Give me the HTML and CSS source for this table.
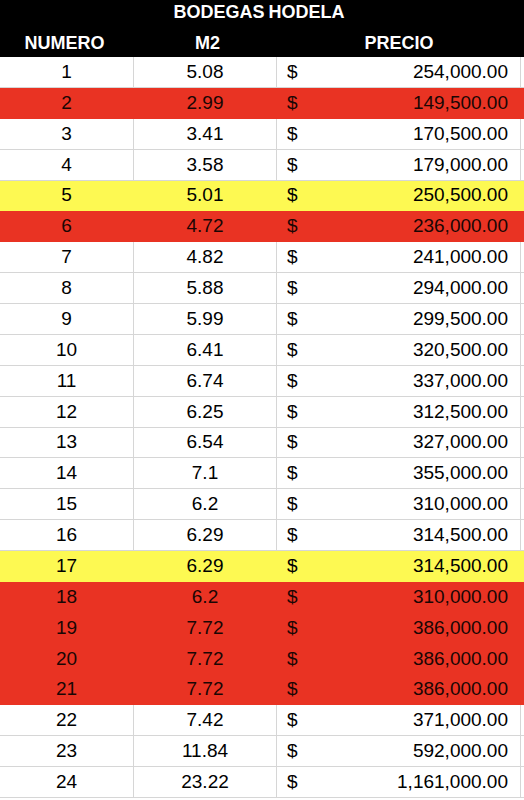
FILE: index.html
```html
<!DOCTYPE html>
<html lang="es">
<head>
<meta charset="utf-8">
<title>Bodegas Hodela</title>
<link rel="stylesheet" href="styles.css">
</head>
<body>
<div class="sheet">
  <div class="title">BODEGAS HODELA</div>
  <div class="head">
    <div class="hc">NUMERO</div>
    <div class="hc">M2</div>
    <div class="hc span2">PRECIO</div>
  </div>
  <div class="body">
    <div class="row"><div class="c num">1</div><div class="c m2">5.08</div><div class="c cur">$</div><div class="c price">254,000.00</div></div>
    <div class="row red"><div class="c num">2</div><div class="c m2">2.99</div><div class="c cur">$</div><div class="c price">149,500.00</div></div>
    <div class="row"><div class="c num">3</div><div class="c m2">3.41</div><div class="c cur">$</div><div class="c price">170,500.00</div></div>
    <div class="row"><div class="c num">4</div><div class="c m2">3.58</div><div class="c cur">$</div><div class="c price">179,000.00</div></div>
    <div class="row yellow"><div class="c num">5</div><div class="c m2">5.01</div><div class="c cur">$</div><div class="c price">250,500.00</div></div>
    <div class="row red"><div class="c num">6</div><div class="c m2">4.72</div><div class="c cur">$</div><div class="c price">236,000.00</div></div>
    <div class="row"><div class="c num">7</div><div class="c m2">4.82</div><div class="c cur">$</div><div class="c price">241,000.00</div></div>
    <div class="row"><div class="c num">8</div><div class="c m2">5.88</div><div class="c cur">$</div><div class="c price">294,000.00</div></div>
    <div class="row"><div class="c num">9</div><div class="c m2">5.99</div><div class="c cur">$</div><div class="c price">299,500.00</div></div>
    <div class="row"><div class="c num">10</div><div class="c m2">6.41</div><div class="c cur">$</div><div class="c price">320,500.00</div></div>
    <div class="row"><div class="c num">11</div><div class="c m2">6.74</div><div class="c cur">$</div><div class="c price">337,000.00</div></div>
    <div class="row"><div class="c num">12</div><div class="c m2">6.25</div><div class="c cur">$</div><div class="c price">312,500.00</div></div>
    <div class="row"><div class="c num">13</div><div class="c m2">6.54</div><div class="c cur">$</div><div class="c price">327,000.00</div></div>
    <div class="row"><div class="c num">14</div><div class="c m2">7.1</div><div class="c cur">$</div><div class="c price">355,000.00</div></div>
    <div class="row"><div class="c num">15</div><div class="c m2">6.2</div><div class="c cur">$</div><div class="c price">310,000.00</div></div>
    <div class="row"><div class="c num">16</div><div class="c m2">6.29</div><div class="c cur">$</div><div class="c price">314,500.00</div></div>
    <div class="row yellow"><div class="c num">17</div><div class="c m2">6.29</div><div class="c cur">$</div><div class="c price">314,500.00</div></div>
    <div class="row red"><div class="c num">18</div><div class="c m2">6.2</div><div class="c cur">$</div><div class="c price">310,000.00</div></div>
    <div class="row red"><div class="c num">19</div><div class="c m2">7.72</div><div class="c cur">$</div><div class="c price">386,000.00</div></div>
    <div class="row red"><div class="c num">20</div><div class="c m2">7.72</div><div class="c cur">$</div><div class="c price">386,000.00</div></div>
    <div class="row red"><div class="c num">21</div><div class="c m2">7.72</div><div class="c cur">$</div><div class="c price">386,000.00</div></div>
    <div class="row"><div class="c num">22</div><div class="c m2">7.42</div><div class="c cur">$</div><div class="c price">371,000.00</div></div>
    <div class="row"><div class="c num">23</div><div class="c m2">11.84</div><div class="c cur">$</div><div class="c price">592,000.00</div></div>
    <div class="row"><div class="c num">24</div><div class="c m2">23.22</div><div class="c cur">$</div><div class="c price">1,161,000.00</div></div>
  </div>
</div>
</body>
</html>
```

FILE: styles.css
```css
* { box-sizing: border-box; }
html, body { margin: 0; padding: 0; background: #ffffff; }
body { width: 524px; height: 800px; overflow: hidden; font-family: "Liberation Sans", Arial, sans-serif; }

.sheet { width: 524px; }

.title {
  height: 29px;
  background: #000;
  color: #fff;
  font-size: 18px;
  font-weight: 700;
  text-align: center;
  line-height: 24px;
  word-spacing: -1px;
  padding-right: 6px;
}

.head {
  height: 28px;
  background: #000;
  color: #fff;
  display: grid;
  grid-template-columns: 133px 143px 245px 3px;
  font-size: 18px;
  font-weight: 700;
}
.hc { display: flex; align-items: center; justify-content: center; }
.hc.span2 { grid-column: span 2; justify-content: center; padding-right: 2px; }
.hc:nth-child(1) { padding-right: 4px; }
.hc:nth-child(2) { padding-left: 6px; }

.body {
  height: 741px;
  display: grid;
  grid-template-rows: repeat(24, 1fr);
}

.row {
  display: grid;
  grid-template-columns: 133px 143px 60px 185px 3px;
  font-size: 19px;
  color: #000;
  border-bottom: 1px solid #d6d6d6;
}

.c { display: flex; align-items: center; }
.num { justify-content: center; }
.m2 { justify-content: center; border-left: 1px solid #d6d6d6; }
.cur { border-left: 1px solid #d6d6d6; padding-left: 10px; }
.price { justify-content: flex-end; padding-right: 12px; border-right: 1px solid #d6d6d6; }

.row.red { background: #e93323; border-bottom-color: #e93323; color: #1a0604; }
.row.yellow { background: #fdf952; border-bottom-color: #fdf952; }
.row.red .c, .row.yellow .c { border-color: transparent; }
```
